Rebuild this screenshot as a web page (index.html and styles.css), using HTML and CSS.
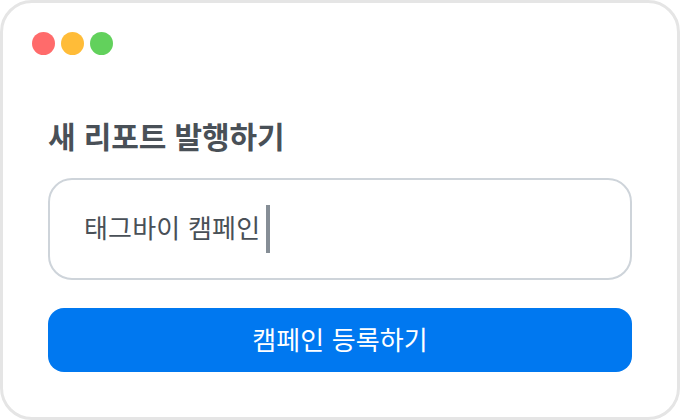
FILE: index.html
```html
<!DOCTYPE html>
<html lang="ko">
<head>
<meta charset="utf-8">
<title>새 리포트 발행하기</title>
<link rel="stylesheet" href="styles.css">
</head>
<body>
<div class="window">
  <div class="dots">
    <span class="dot red"></span>
    <span class="dot yellow"></span>
    <span class="dot green"></span>
  </div>
  <h1 class="title">새 리포트 발행하기</h1>
  <div class="field"><span class="value">태그바이 캠페인</span><span class="caret"></span></div>
  <button class="submit">캠페인 등록하기</button>
</div>
</body>
</html>
```
FILE: styles.css
```css
* { box-sizing: border-box; }
html, body { margin: 0; padding: 0; background: #fff; }
body { width: 680px; height: 420px; font-family: "Noto Sans CJK KR", sans-serif; }
.window {
  width: 680px;
  height: 420px;
  background: #fff;
  border: 3px solid #e5e5e5;
  border-radius: 32px;
  padding: 29px 45px 0;
  display: flex;
  flex-direction: column;
}
.dots { display: flex; gap: 6px; margin-left: -16px; }
.dot { width: 23px; height: 23px; border-radius: 50%; }
.red { background: #ff6b6b; }
.yellow { background: #ffbc38; }
.green { background: #62d15c; }
.title {
  margin: 60px 0 0;
  font-size: 30px;
  line-height: 40px;
  font-weight: 700;
  color: #495057;
  letter-spacing: -0.1px;
}
.field {
  margin-top: 23px;
  height: 102px;
  border: 2px solid #ced4da;
  border-radius: 24px;
  padding: 0 0 0 34px;
  display: flex;
  align-items: center;
  gap: 6px;
}
.value { font-size: 26px; color: #495057; letter-spacing: 0.2px; padding-bottom: 5px; }
.caret { width: 4px; height: 48px; background: #868e96; }
.submit {
  margin-top: 28px;
  height: 64px;
  border: 0;
  border-radius: 16px;
  background: #0078f0;
  color: #fff;
  font: 400 26px "Noto Sans CJK KR", sans-serif;
  letter-spacing: 0.1px;
  padding: 0 0 4px;
}
```
